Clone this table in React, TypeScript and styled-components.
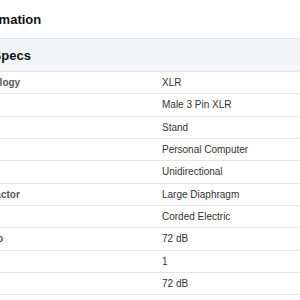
import React from 'react';
import styled, { createGlobalStyle } from 'styled-components';

const GlobalStyle = createGlobalStyle`
  html, body {
    margin: 0;
    padding: 0;
    background: #fff;
    overflow: hidden;
  }

  body {
    font-family: 'Liberation Sans', Arial, sans-serif;
  }
`;

type Spec = { label: string; value: string };

const specs: Spec[] = [
  { label: 'Connectivity Technology', value: 'XLR' },
  { label: 'Connector Type', value: 'Male 3 Pin XLR' },
  { label: 'Mounting Type', value: 'Stand' },
  { label: 'Hardware Platform', value: 'Personal Computer' },
  { label: 'Polar Pattern', value: 'Unidirectional' },
  { label: 'Microphone Form Factor', value: 'Large Diaphragm' },
  { label: 'Power Source', value: 'Corded Electric' },
  { label: 'Signal-to-Noise Ratio', value: '72 dB' },
  { label: 'Number of Channels', value: '1' },
  { label: 'Sensitivity', value: '72 dB' },
];

const App = () => {
  return (
    <>
      <GlobalStyle />
      <Page>
        <Title>Product information</Title>
        <SpecTable>
          <TableHead>Technical Specs</TableHead>
          {specs.map((spec, i) => (
            <Row key={i}>
              <Label>{spec.label}</Label>
              <Value>{spec.value}</Value>
            </Row>
          ))}
        </SpecTable>
      </Page>
    </>
  );
};

export default App;

/* the page sits scrolled to the right, so the label column starts off-screen */
const Page = styled.div`
  width: 440px;
  margin-left: -110px;
`;

const Title = styled.h2`
  margin: 0;
  height: 38px;
  display: flex;
  align-items: center;
  padding-left: 27px;
  font-size: 13px;
  font-weight: 700;
  color: #0f1111;
`;

const SpecTable = styled.div`
  border-top: 1px solid #e3e6e6;
`;

const TableHead = styled.div`
  height: 32px;
  display: flex;
  align-items: center;
  padding-left: 40px;
  font-size: 13px;
  font-weight: 700;
  color: #0f1111;
  background: #f3f5f8;
  border-bottom: 1px solid #e3e6e6;
`;

const Row = styled.div`
  display: flex;
  align-items: center;
  height: 21.34px;
  border-bottom: 1px solid #e3e6e6;
  font-size: 10px;
`;

const Label = styled.div`
  width: 262px;
  padding-left: 12px;
  box-sizing: border-box;
  font-weight: 700;
  color: #565959;
`;

const Value = styled.div`
  padding-left: 10px;
  color: #333;
`;
